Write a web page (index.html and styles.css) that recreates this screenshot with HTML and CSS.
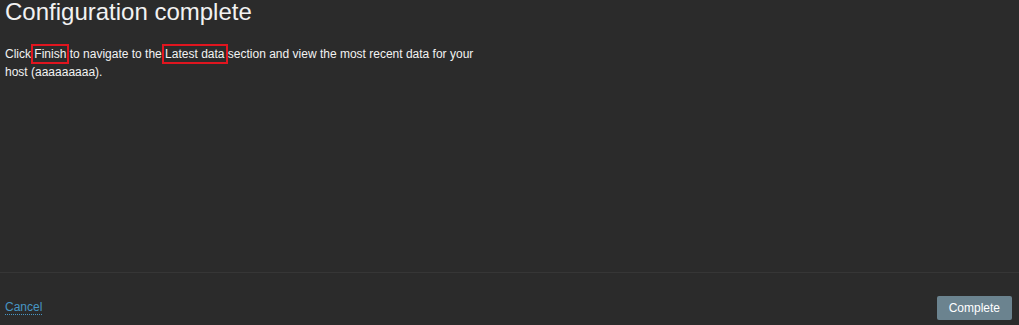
FILE: index.html
```html
<!DOCTYPE html>
<html lang="en">
<head>
    <meta charset="UTF-8">
    <meta name="viewport" content="width=device-width, initial-scale=1.0">
    <title>Configuration complete</title>
    <link rel="stylesheet" href="styles.css">
</head>
<body>
    <div class="page">
        <div class="content">
            <h1>Configuration complete</h1>
            <p class="info">Click <span class="mark">Finish</span> to navigate to the <span class="mark">Latest data</span> section and view the most recent data for your host (aaaaaaaaa).</p>
        </div>
        <div class="footer">
            <a href="#" class="link">Cancel</a>
            <button class="btn">Complete</button>
        </div>
    </div>
</body>
</html>
```

FILE: styles.css
```css
html, body {
    margin: 0;
    height: 100%;
}
body {
    background-color: #2b2b2b;
    color: #f2f2f2;
    font-family: "Liberation Sans", Arial, sans-serif;
    font-size: 12px;
}
.page {
    display: flex;
    flex-direction: column;
    height: 100%;
}
.content {
    flex: 1;
    padding: 0 5px;
}
h1 {
    margin: 0;
    font-size: 24px;
    font-weight: normal;
    line-height: 24px;
}
.info {
    margin: 21px 0 0 0;
    max-width: 480px;
    line-height: 18px;
}
.mark {
    outline: 2px solid #e0151f;
    outline-offset: 1px;
}
.footer {
    display: flex;
    justify-content: space-between;
    align-items: flex-end;
    border-top: 1px solid #363636;
    padding: 23px 7px 5px 5px;
}
.link {
    color: #4796c4;
    text-decoration: none;
    border-bottom: 1px dotted #4796c4;
    line-height: 14px;
    margin-bottom: 5px;
}
.btn {
    height: 24px;
    padding: 0 12px;
    background-color: #6b838f;
    color: #ffffff;
    border: none;
    border-radius: 2px;
    font-family: "Liberation Sans", Arial, sans-serif;
    font-size: 12px;
    cursor: pointer;
}
```
